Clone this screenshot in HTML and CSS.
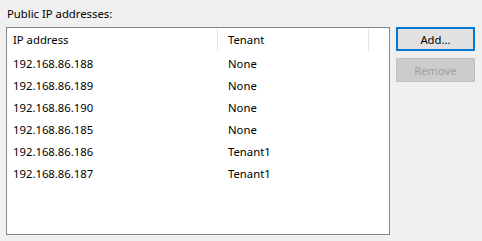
FILE: index.html
```html
<!DOCTYPE html>
<html lang="en">
<head>
  <meta charset="utf-8"/>
  <title>Public IP addresses</title>
  <link rel="stylesheet" href="styles.css">
</head>
<body>
  <div class="label">Public IP addresses:</div>
  <div class="panel">
    <div class="listbox">
      <div class="row header">
        <div class="col ip">IP address</div>
        <div class="col tenant">Tenant</div>
      </div>
      <div class="row"><div class="col ip">192.168.86.188</div><div class="col tenant">None</div></div>
      <div class="row"><div class="col ip">192.168.86.189</div><div class="col tenant">None</div></div>
      <div class="row"><div class="col ip">192.168.86.190</div><div class="col tenant">None</div></div>
      <div class="row"><div class="col ip">192.168.86.185</div><div class="col tenant">None</div></div>
      <div class="row"><div class="col ip">192.168.86.186</div><div class="col tenant">Tenant1</div></div>
      <div class="row"><div class="col ip">192.168.86.187</div><div class="col tenant">Tenant1</div></div>
    </div>
    <div class="buttons">
      <button class="btn default">Add...</button>
      <button class="btn" disabled>Remove</button>
    </div>
  </div>
</body>
</html>
```
FILE: styles.css
```css
body {
  margin: 0;
  padding: 6px 7px 0 6px;
  background: #f0f0f0;
  font-family: 'Noto Sans', 'Segoe UI', sans-serif;
  font-size: 11.3px;
  color: #000;
}
.label {
  height: 15px;
  line-height: 15px;
  padding-left: 1px;
  margin-bottom: 6px;
}
.panel {
  display: flex;
  gap: 6px;
  align-items: flex-start;
}
.listbox {
  width: 382px;
  height: 206px;
  border: 1px solid #828790;
  background: #fff;
}
.row {
  display: flex;
  height: 22px;
  align-items: center;
}
.row.header {
  height: 23px;
  margin-bottom: 1px;
}
.col {
  padding-left: 6px;
  box-sizing: border-box;
}
.col.ip {
  width: 211px;
}
.col.tenant {
  width: 151px;
  padding-left: 10px;
}
.header .col {
  height: 23px;
  line-height: 23px;
  border-right: 1px solid #e5e5e5;
}
.btn {
  display: block;
  width: 79px;
  height: 24px;
  margin-bottom: 7px;
  font-family: inherit;
  font-size: 11.3px;
  color: #000;
  background: #e1e1e1;
  border: 1px solid #adadad;
  padding: 0;
}
.btn.default {
  border: 2px solid #0078d7;
}
.btn:disabled {
  background: #cccccc;
  border-color: #bfbfbf;
  color: #a0a0a0;
}
```
